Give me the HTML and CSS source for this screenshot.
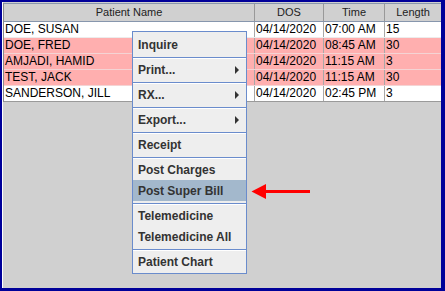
FILE: index.html
```html
<!DOCTYPE html>
<html>
<head>
  <link rel="stylesheet" href="styles.css">
</head>
<body>
  <div class="frame">
    <div class="table">
      <div class="row head">
        <div class="cell">Patient Name</div>
        <div class="cell">DOS</div>
        <div class="cell">Time</div>
        <div class="cell">Length</div>
      </div>
      <div class="row">
        <div class="cell">DOE, SUSAN</div>
        <div class="cell">04/14/2020</div>
        <div class="cell">07:00 AM</div>
        <div class="cell">15</div>
      </div>
      <div class="row flagged">
        <div class="cell">DOE, FRED</div>
        <div class="cell">04/14/2020</div>
        <div class="cell">08:45 AM</div>
        <div class="cell">30</div>
      </div>
      <div class="row flagged">
        <div class="cell">AMJADI, HAMID</div>
        <div class="cell">04/14/2020</div>
        <div class="cell">11:15 AM</div>
        <div class="cell">3</div>
      </div>
      <div class="row flagged">
        <div class="cell">TEST, JACK</div>
        <div class="cell">04/14/2020</div>
        <div class="cell">11:15 AM</div>
        <div class="cell">30</div>
      </div>
      <div class="row last">
        <div class="cell">SANDERSON, JILL</div>
        <div class="cell">04/14/2020</div>
        <div class="cell">02:45 PM</div>
        <div class="cell">3</div>
      </div>
    </div>

    <div class="menu">
      <div class="item">Inquire</div>
      <div class="sep"></div>
      <div class="item">Print...<span class="sub"></span></div>
      <div class="sep"></div>
      <div class="item">RX...<span class="sub"></span></div>
      <div class="sep"></div>
      <div class="item">Export...<span class="sub"></span></div>
      <div class="sep"></div>
      <div class="item">Receipt</div>
      <div class="sep"></div>
      <div class="item">Post Charges</div>
      <div class="item selected">Post Super Bill</div>
      <div class="sep"></div>
      <div class="item">Telemedicine</div>
      <div class="item">Telemedicine All</div>
      <div class="sep"></div>
      <div class="item">Patient Chart</div>
    </div>

    <svg class="arrow" width="62" height="20" viewBox="0 0 62 20">
      <polygon points="1.5,9.5 16,2 16,17" fill="#ff0000"/>
      <rect x="15" y="8" width="45" height="3" fill="#ff0000"/>
    </svg>
  </div>
</body>
</html>
```

FILE: styles.css
```css
* {
  box-sizing: border-box;
}

body {
  margin: 0;
  background: #000099;
  font-family: "Liberation Sans", Arial, sans-serif;
}

.frame {
  position: relative;
  margin: 2px 4px 3px 2px;
  height: 286px;
  background: #d0d0d0;
  border-left: 1px solid #ffffff;
  padding-top: 1px;
}

.table {
  border-left: 1px solid #8a8a8a;
}

.row {
  display: grid;
  grid-template-columns: 251px 69px 61px 1fr;
  height: 16px;
  background: #ffffff;
  border-bottom: 1px solid #ececec;
  font-size: 12px;
  line-height: 15px;
  color: #000000;
}

.row.flagged {
  background: #ffafaf;
  border-bottom-color: #f4d4d4;
}

.row.last {
  border-bottom-color: #9a9a9a;
}

.cell {
  padding-left: 1px;
  border-right: 1px solid #a8a8a8;
  white-space: nowrap;
  overflow: hidden;
}

.cell:last-child {
  border-right: none;
}

.row.head {
  height: 19px;
  background: #d0d0d0;
  border-top: 1px solid #8796ad;
  border-bottom: 1px solid #8796ad;
  font-size: 11px;
  line-height: 17px;
  color: #222222;
}

.head .cell {
  text-align: center;
  border-right: 1px solid #999999;
  padding-left: 0;
}

.head .cell:last-child {
  border-right: none;
}

.menu {
  position: absolute;
  left: 129px;
  top: 29px;
  width: 115px;
  height: 243px;
  background: #eeeeee;
  border: 1px solid #6a8ccc;
  padding-top: 2px;
}

.item {
  display: flex;
  align-items: center;
  height: 21px;
  padding-left: 5px;
  font-size: 12px;
  font-weight: bold;
  color: #333333;
}

.item.selected {
  background: #a3b8cc;
}

.sub {
  margin-left: auto;
  margin-right: 7px;
  width: 0;
  height: 0;
  border-left: 4px solid #333333;
  border-top: 4px solid transparent;
  border-bottom: 4px solid transparent;
}

.sep {
  height: 2px;
  margin-top: 2px;
  border-top: 1px solid #6a8ccc;
  border-bottom: 1px solid #ffffff;
}

.arrow {
  position: absolute;
  left: 247px;
  top: 180px;
}
```
